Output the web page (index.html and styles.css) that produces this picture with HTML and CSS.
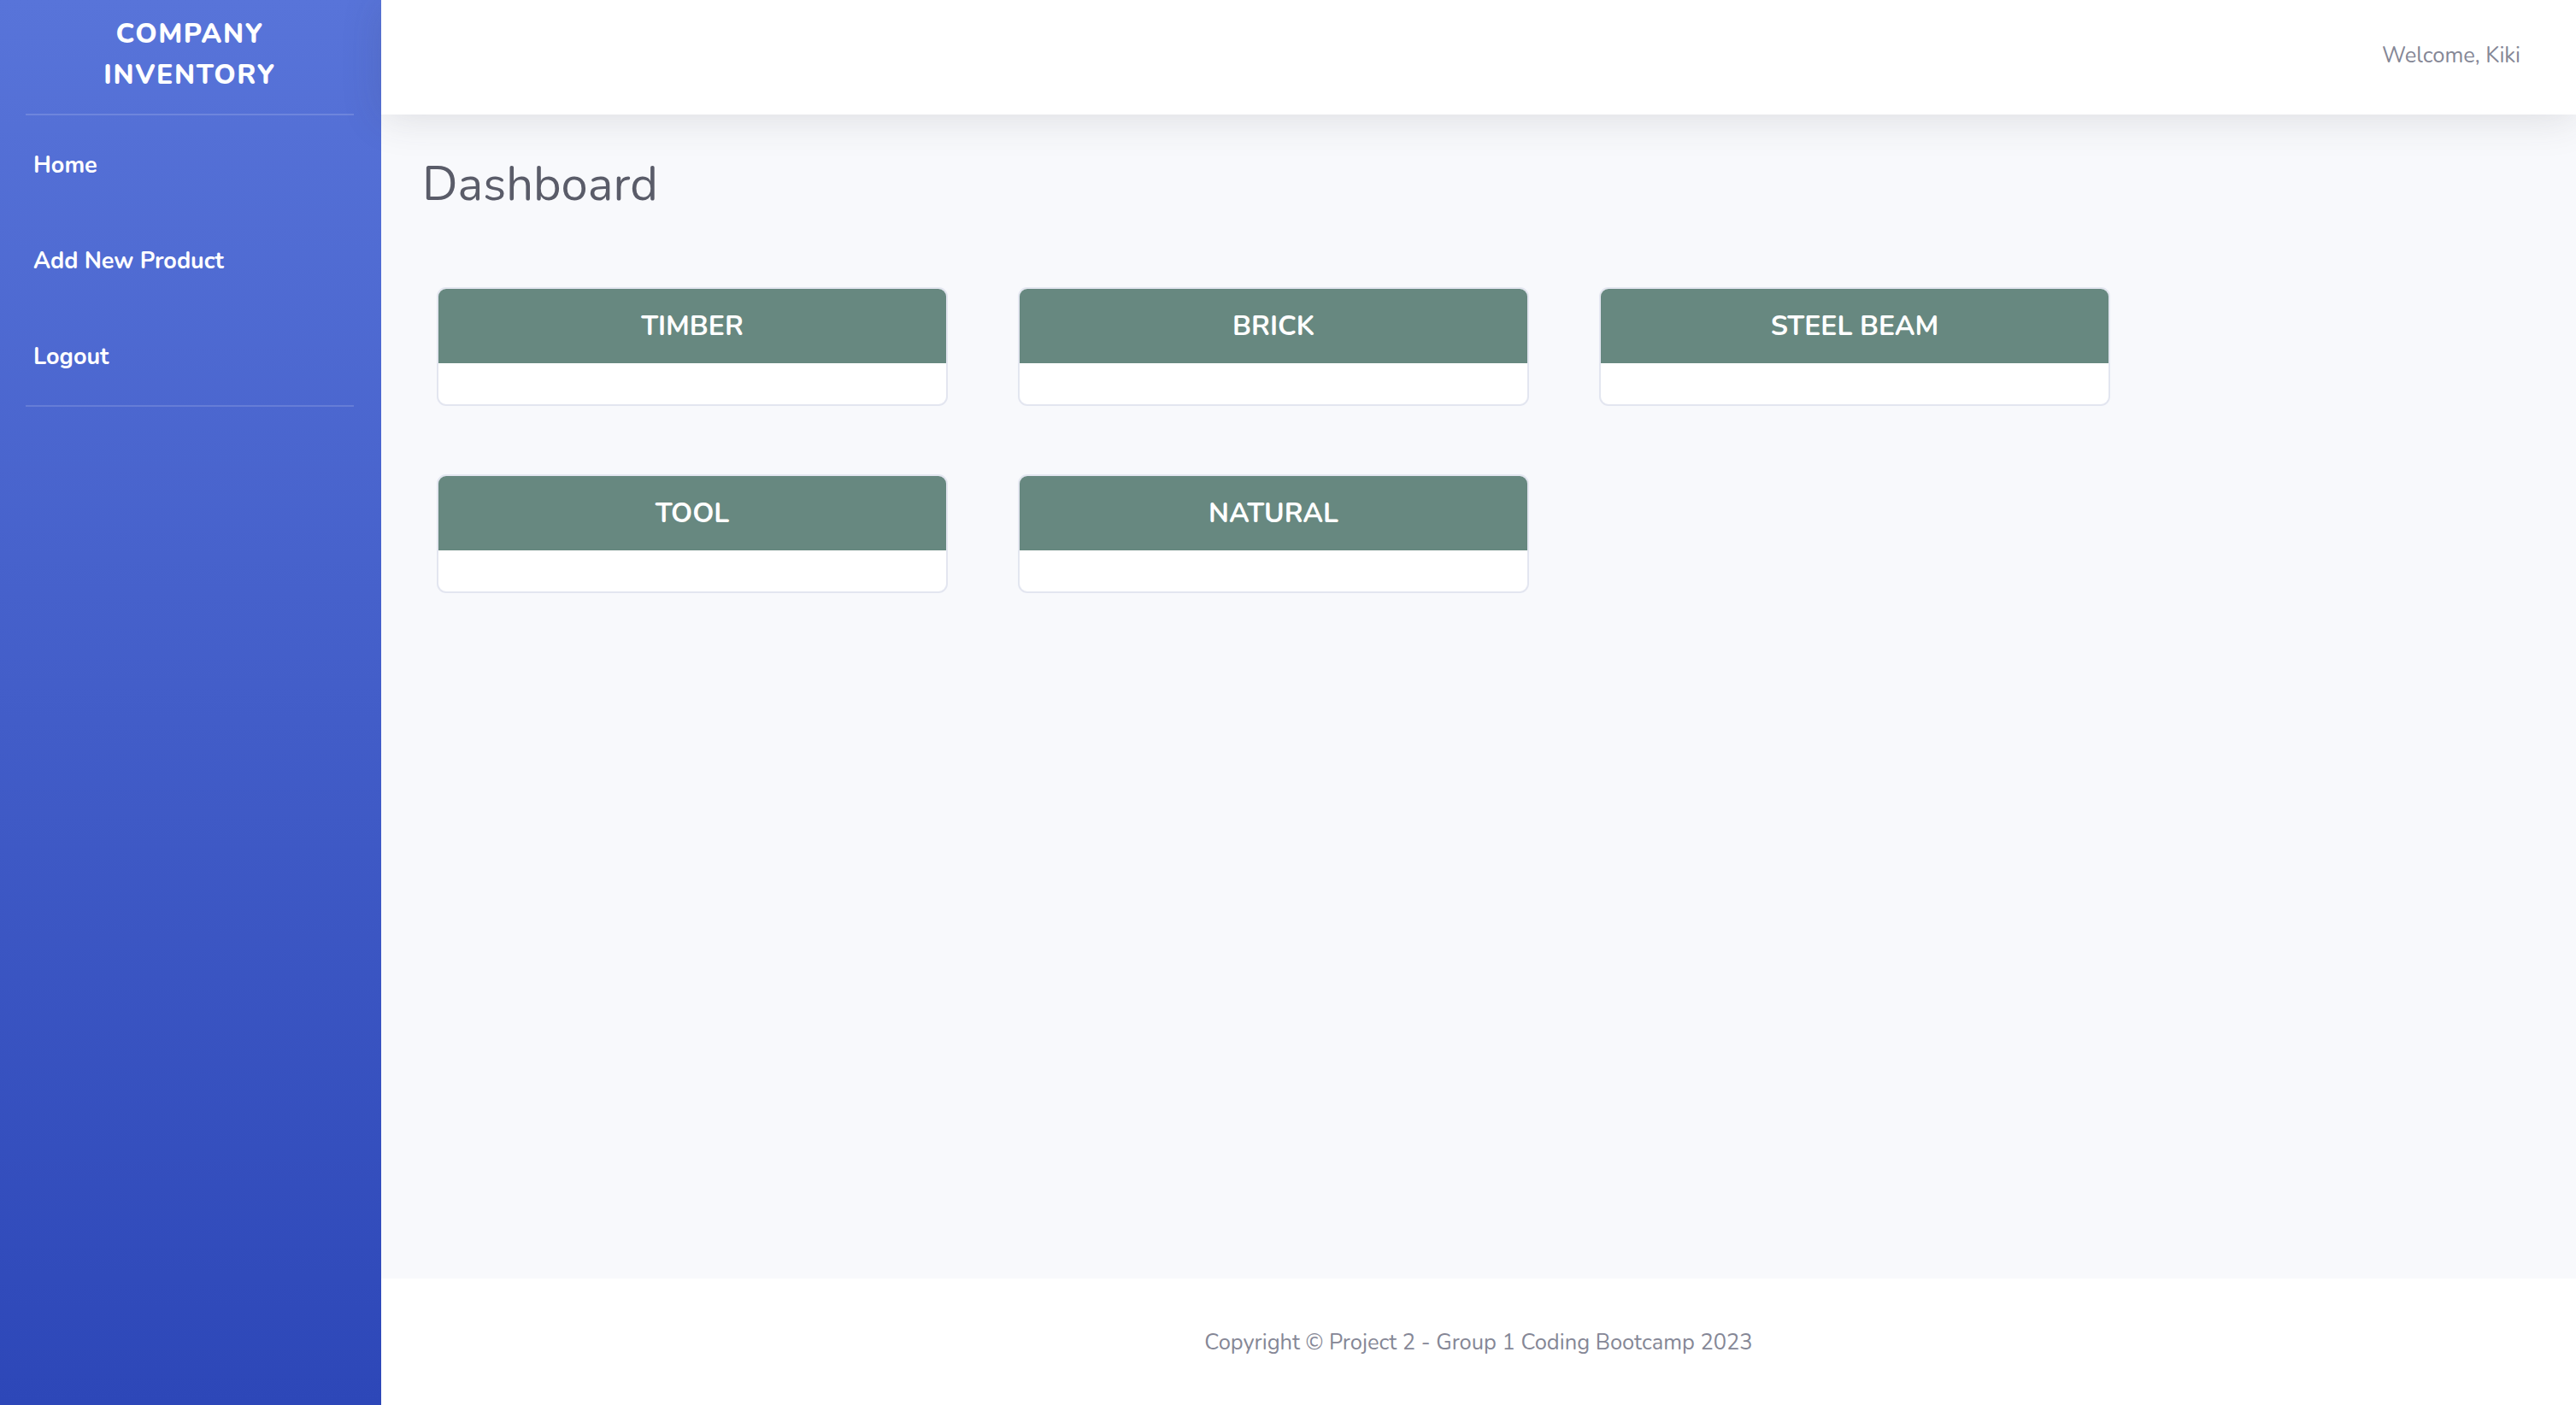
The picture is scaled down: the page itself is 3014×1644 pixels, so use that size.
FILE: index.html
```html
<!DOCTYPE html>
<html lang="en">
<head>
<meta charset="utf-8">
<title>Company Inventory - Dashboard</title>
<link rel="stylesheet" href="styles.css">
</head>
<body>
<div class="wrapper">
  <aside class="sidebar">
    <div class="brand">COMPANY<br>INVENTORY</div>
    <hr class="divider">
    <nav class="nav">
      <a class="nav-link" href="#">Home</a>
      <a class="nav-link" href="#">Add New Product</a>
      <a class="nav-link" href="#">Logout</a>
    </nav>
    <hr class="divider">
  </aside>
  <div class="content-wrapper">
    <header class="topbar">
      <span class="welcome">Welcome, Kiki</span>
    </header>
    <main class="content">
      <h1 class="page-title">Dashboard</h1>
      <div class="cards">
        <div class="card"><div class="card-header">TIMBER</div><div class="card-body"></div></div>
        <div class="card"><div class="card-header">BRICK</div><div class="card-body"></div></div>
        <div class="card"><div class="card-header">STEEL BEAM</div><div class="card-body"></div></div>
        <div class="card"><div class="card-header">TOOL</div><div class="card-body"></div></div>
        <div class="card"><div class="card-header">NATURAL</div><div class="card-body"></div></div>
      </div>
    </main>
    <footer class="footer">
      <span>Copyright &copy; Project 2 - Group 1 Coding Bootcamp 2023</span>
    </footer>
  </div>
</div>
</body>
</html>
```
FILE: styles.css
```css
* { box-sizing: border-box; }
html, body { margin: 0; padding: 0; height: 100%; overflow: hidden; }
body {
  font-family: "Nunito", "Noto Sans", "Open Sans", sans-serif;
  color: #858796;
  background: #fff;
}
.wrapper {
  display: flex;
  height: 1644px;
}
.sidebar {
  width: 446px;
  flex: 0 0 446px;
  background: linear-gradient(180deg, #5874d9 0%, #2d47b8 100%);
  padding: 0 32px 0 30px;
  display: flex;
  flex-direction: column;
}
.brand {
  color: #fff;
  font-weight: 800;
  font-size: 32px;
  line-height: 48px;
  letter-spacing: 1.6px;
  text-align: center;
  padding-top: 16px;
  height: 133px;
}
.divider {
  margin: 0;
  border: 0;
  border-top: 2px solid rgba(255,255,255,0.15);
  width: 384px;
}
.nav {
  display: flex;
  flex-direction: column;
  padding-top: 3px;
}
.nav-link {
  color: #fff;
  text-decoration: none;
  font-weight: 700;
  font-size: 27px;
  height: 112px;
  line-height: 112px;
  padding-left: 9px;
}
.content-wrapper {
  flex: 1;
  display: flex;
  flex-direction: column;
  background: #f8f9fc;
}
.topbar {
  height: 134px;
  flex: 0 0 134px;
  background: #fff;
  display: flex;
  align-items: center;
  justify-content: flex-end;
  padding-right: 65px;
  padding-bottom: 6px;
  box-shadow: 0 4px 48px rgba(58,59,69,0.15);
  position: relative;
  z-index: 1;
}
.welcome {
  font-size: 25.5px;
  color: #858796;
}
.content {
  flex: 1;
  padding: 0 48px;
}
.page-title {
  margin: 48px 0 0 0;
  font-size: 56px;
  font-weight: 400;
  color: #5a5c69;
  line-height: 67px;
}
.cards {
  display: flex;
  flex-wrap: wrap;
  column-gap: 82px;
  row-gap: 80px;
  padding-left: 17px;
  margin-top: 87px;
}
.card {
  width: 598px;
  background: #fff;
  border: 2px solid #e3e6f0;
  border-radius: 11px;
  overflow: hidden;
}
.card-header {
  background: #678880;
  color: #fff;
  font-weight: 700;
  font-size: 32px;
  text-align: center;
  height: 87px;
  line-height: 87px;
}
.card-body {
  height: 48px;
}
.footer {
  height: 148px;
  flex: 0 0 148px;
  background: #fff;
  display: flex;
  align-items: center;
  justify-content: center;
  font-size: 25.5px;
  color: #858796;
}
```
